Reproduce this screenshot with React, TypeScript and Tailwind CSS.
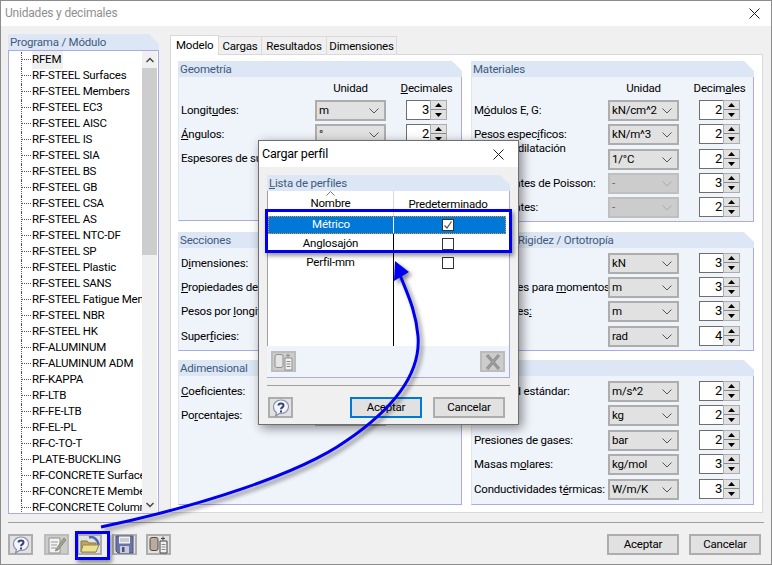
import React from 'react';

const modules = [
  'RFEM', 'RF-STEEL Surfaces', 'RF-STEEL Members', 'RF-STEEL EC3', 'RF-STEEL AISC', 'RF-STEEL IS', 'RF-STEEL SIA',
  'RF-STEEL BS', 'RF-STEEL GB', 'RF-STEEL CSA', 'RF-STEEL AS', 'RF-STEEL NTC-DF', 'RF-STEEL SP', 'RF-STEEL Plastic',
  'RF-STEEL SANS', 'RF-STEEL Fatigue Members', 'RF-STEEL NBR', 'RF-STEEL HK', 'RF-ALUMINUM', 'RF-ALUMINUM ADM',
  'RF-KAPPA', 'RF-LTB', 'RF-FE-LTB', 'RF-EL-PL', 'RF-C-TO-T', 'PLATE-BUCKLING', 'RF-CONCRETE Surfaces',
  'RF-CONCRETE Members', 'RF-CONCRETE Columns',
];

const Chevron: React.FC<{ color?: string }> = ({ color = '#555' }) => (
  <svg width="10" height="6" viewBox="0 0 10 6" fill="none" stroke={color} strokeWidth="1">
    <path d="M0.5 0.5L5 5L9.5 0.5" />
  </svg>
);

const Arrow: React.FC<{ down?: boolean }> = ({ down }) => (
  <svg width="7" height="4" viewBox="0 0 7 4" fill="#000">
    <path d={down ? 'M0 0H7L3.5 4Z' : 'M0 4H7L3.5 0Z'} />
  </svg>
);

const Combo: React.FC<{ value: string; disabled?: boolean }> = ({ value, disabled }) => (
  <div className={`w-[71px] h-[21px] shrink-0 border-2 flex items-center justify-between pl-[2px] pr-[5px] ${disabled ? 'bg-[#cccccc] border-[#bfbfbf] text-[#666]' : 'bg-[#e1e1e1] border-[#adadad] text-black'}`}>
    <span>{value}</span>
    <Chevron color={disabled ? '#aaa' : '#555'} />
  </div>
);

const Spinner: React.FC<{ value: number }> = ({ value }) => (
  <div className="w-[41px] h-[20px] shrink-0 ml-[20px] flex">
    <div className="w-[24px] bg-white border border-[#6e6e6e] border-r-0 text-right pr-[1px] text-[13px] leading-[17px]">{value}</div>
    <div className="w-[17px] bg-[#e1e1e1] border border-[#adadad] flex flex-col items-center justify-around py-[1px]">
      <Arrow />
      <div className="w-full h-px bg-[#888]" />
      <Arrow down />
    </div>
  </div>
);

const Row: React.FC<{ label: React.ReactNode; value: string; dec: number; tall?: boolean; disabled?: boolean; wrap?: boolean }> = ({ label, value, dec, tall, disabled, wrap }) => (
  <div className={`flex items-start pl-[2px] ${tall ? 'h-[25px]' : 'h-[24px]'}`}>
    <div className={`w-[134px] shrink-0 flex items-center h-[21px] ${wrap ? 'leading-[15px] -mt-[4px]' : 'whitespace-nowrap'}`}>
      <span>{label}</span>
    </div>
    <Combo value={value} disabled={disabled} />
    <Spinner value={dec} />
  </div>
);

const Group: React.FC<{ title: React.ReactNode; children?: React.ReactNode }> = ({ title, children }) => (
  <div className="flex flex-col">
    <div className="h-[16px] shrink-0 bg-[#dce6f4] text-[#3f5b7d] pl-[2px] leading-[17px] [clip-path:polygon(0_0,calc(100%-10px)_0,100%_10px,100%_100%,0_100%)]">{title}</div>
    <div className="flex-1 bg-[#eff3fa] border-r border-b border-[#aaaae6] border-l border-l-[#dce6f4]">{children}</div>
  </div>
);

const ColHeads: React.FC<{ decimals: React.ReactNode }> = ({ decimals }) => (
  <div className="h-[23px] flex items-center pl-[2px]">
    <div className="w-[134px]" />
    <div className="w-[71px] text-center">Unidad</div>
    <div className="w-[61px] ml-[10px] text-center">{decimals}</div>
  </div>
);

const HelpIcon: React.FC = () => (
  <svg width="18" height="18" viewBox="0 0 18 18">
    <path d="M9 1C4.5 1 1.5 4 1.5 8c0 2.500 1.300 4.500 3 5.500L3.500 17l4-2.600C12.500 15 16.500 12 16.500 8 16.500 4 13.500 1 9 1Z" fill="#f4f6fb" stroke="#8b93ad" strokeWidth="1.200" />
    <path d="M6.500 6.500C6.500 3.800 11.500 3.600 11.500 6.500 11.500 8.500 9 8.300 9 10.300" fill="none" stroke="#33407e" strokeWidth="2" />
    <rect x="8" y="11.500" width="2" height="2" fill="#33407e" />
  </svg>
);

const NotesIcon: React.FC = () => (
  <svg width="20" height="20" viewBox="0 0 20 20">
    <path d="M2 3H13V18H2Z" fill="#f2f2f2" stroke="#8f8f8f" />
    <path d="M4 7H11M4 10H10M4 13H9" stroke="#9a9a9a" />
    <path d="M9 14L17 3L19 5L11 15L8.500 16Z" fill="#a7a28a" stroke="#77746a" strokeWidth="0.700" />
  </svg>
);

const FolderIcon: React.FC = () => (
  <svg width="20" height="18" viewBox="0 0 20 18">
    <path d="M9 1.500C13 0 18 3 18.500 9" fill="none" stroke="#4c6aa8" strokeWidth="2.500" />
    <path d="M1 5H7L9 7H16V16H1Z" fill="#b9a862" stroke="#86794a" />
    <path d="M3 9H19L16 16H1Z" fill="#eee08e" stroke="#94864f" />
  </svg>
);

const SaveIcon: React.FC = () => (
  <svg width="19" height="19" viewBox="0 0 19 19">
    <path d="M1 1H18V18H3L1 16Z" fill="#6b74a6" stroke="#4a5280" />
    <rect x="4" y="1.500" width="11" height="7" fill="#f3f3f3" />
    <path d="M5 4H14M5 6H14" stroke="#a6a6a6" />
    <rect x="5" y="11" width="9" height="7" fill="#c8cbd9" />
    <rect x="7" y="12" width="2.500" height="5" fill="#4a5280" />
  </svg>
);

const CopyIcon: React.FC<{ faded?: boolean }> = ({ faded }) => (
  <svg width="20" height="19" viewBox="0 0 20 19">
    <rect x="1" y="2.500" width="8" height="13" rx="2" fill={faded ? '#e4e4e4' : '#b9aba0'} stroke={faded ? '#8f8f8f' : '#5c4a40'} />
    <path d="M11 6H18V18H11Z" fill="#f1f1f1" stroke={faded ? '#8f8f8f' : '#444'} />
    <path d="M12.500 9.500H16.500M12.500 12H16.500M12.500 14.500H16.500" stroke="#888" />
    <path d="M12 3.500H16M14 1.500V5.500" stroke={faded ? '#8f8f8f' : '#444'} />
  </svg>
);

const DeleteIcon: React.FC = () => (
  <svg width="18" height="18" viewBox="0 0 18 18" fill="none">
    <path d="M3 2L15 16M15 2L3 16" stroke="#8c8c8c" strokeWidth="3" />
    <path d="M3 2L15 16M15 2L3 16" stroke="#a9a9a9" strokeWidth="1" />
  </svg>
);

const IconButton: React.FC<{ children: React.ReactNode; disabled?: boolean; className?: string }> = ({ children, disabled, className = '' }) => (
  <div className={`h-[21px] w-[25px] shrink-0 border-2 flex items-center justify-center ${disabled ? 'bg-[#cccccc] border-[#bcbcbc]' : 'bg-[#e1e1e1] border-[#adadad]'} ${className}`}>
    {children}
  </div>
);

const Button: React.FC<{ label: string; focused?: boolean }> = ({ label, focused }) => (
  <div className={`w-[72px] h-[21px] shrink-0 border-2 bg-[#e1e1e1] flex items-center justify-center ${focused ? 'border-[#0078d7]' : 'border-[#adadad]'}`}>{label}</div>
);

const CloseX: React.FC = () => (
  <svg width="11" height="11" viewBox="0 0 11 11" stroke="#222" strokeWidth="1" fill="none">
    <path d="M0.500 0.500L10.500 10.500M10.500 0.500L0.500 10.500" />
  </svg>
);

const Check: React.FC<{ checked?: boolean }> = ({ checked }) => (
  <div className="w-[12px] h-[12px] border border-[#333] bg-white flex items-center justify-center">
    {checked && (
      <svg width="10" height="10" viewBox="0 0 10 10" fill="none" stroke="#555" strokeWidth="1.300">
        <path d="M1.500 5.500L4 8L8.500 1.500" />
      </svg>
    )}
  </div>
);

const App: React.FC = () => {
  return (
    <div className="relative w-[772px] h-[565px] overflow-hidden bg-[#f0f0f0] border border-[#8c8c8c] text-[11.500px] tracking-[-0.2px] text-black font-['Roboto',sans-serif] flex flex-col">
      {/* title bar */}
      <div className="h-[25px] shrink-0 bg-white flex items-center justify-between pl-[4px] pr-[11px]">
        <span className="text-[#8f8f8f] text-[12px] -mt-[2px]">Unidades y decimales</span>
        <CloseX />
      </div>

      <div className="flex pl-[7px] pt-[8px] h-[488px] shrink-0">
        {/* module list */}
        <div className="w-[151px] h-[480px] shrink-0 flex flex-col">
          <div className="h-[16px] shrink-0 bg-[#dce6f4] text-[#3f5b7d] pl-[2px] leading-[17px] [clip-path:polygon(0_0,calc(100%-10px)_0,100%_10px,100%_100%,0_100%)]">Programa / Módulo</div>
          <div className="flex-1 min-h-0 bg-white border border-[#aaaae6] flex overflow-hidden">
            <div className="w-[133px] shrink-0 overflow-hidden pt-[1px]">
              {modules.map((name, i) => (
                <div key={name} className="h-[16px] flex items-center whitespace-nowrap pl-[12px]">
                  <span className={`w-[11px] h-[16px] shrink-0 border-l border-dotted border-[#555] relative ${i === 28 ? 'h-[8px] self-start' : ''}`}>
                    <span className="absolute left-0 top-[7px] w-[9px] border-t border-dotted border-[#555]" />
                  </span>
                  <span className={`pr-[2px] ${i === 0 ? 'bg-[#f0f0f0]' : ''}`}>{name}</span>
                </div>
              ))}
            </div>
            <div className="w-[15px] shrink-0 bg-[#f0f0f0] flex flex-col">
              <div className="h-[17px] shrink-0 flex items-center justify-center">
                <svg width="8" height="6" viewBox="0 0 8 6" fill="none" stroke="#444" strokeWidth="1.500"><path d="M0.500 5L4 1.500L7.500 5" /></svg>
              </div>
              <div className="h-[187px] shrink-0 bg-[#cdcdcd]" />
              <div className="flex-1" />
              <div className="h-[17px] shrink-0 flex items-center justify-center">
                <svg width="8" height="6" viewBox="0 0 8 6" fill="none" stroke="#444" strokeWidth="1.500"><path d="M0.500 1L4 4.500L7.500 1" /></svg>
              </div>
            </div>
          </div>
        </div>

        {/* tabs */}
        <div className="ml-[11px] w-[593px] flex flex-col">
          <div className="flex h-[20px] items-end shrink-0">
            <div className="w-[49px] h-[20px] bg-white border border-b-0 border-[#d9d9d9] pl-[5px] leading-[18px] relative top-px z-10">Modelo</div>
            <div className="w-[43px] h-[18px] bg-[#f0f0f0] border border-b-0 border-l-0 border-[#d9d9d9] text-center leading-[18px]">Cargas</div>
            <div className="w-[65px] h-[18px] bg-[#f0f0f0] border border-b-0 border-l-0 border-[#d9d9d9] text-center leading-[18px]">Resultados</div>
            <div className="w-[70px] h-[18px] bg-[#f0f0f0] border border-b-0 border-l-0 border-[#d9d9d9] text-center leading-[18px]">Dimensiones</div>
          </div>
          <div className="h-[459px] bg-white border border-[#d9d9d9] pt-[6px] pl-[7px] grid grid-cols-[284px_283px] grid-rows-[160px_117px_145px] gap-x-[9px] gap-y-[11px]">
            <Group title="Geometría">
              <ColHeads decimals={<><u>D</u>ecimales</>} />
              <Row label={<>Longit<u>u</u>des:</>} value="m" dec={3} />
              <Row label={<><u>Á</u>ngulos:</>} value="°" dec={2} />
              <Row label="Espesores de superficies:" value="mm" dec={2} />
            </Group>
            <Group title="Materiales">
              <ColHeads decimals={<>Decim<u>a</u>les</>} />
              <Row label={<>M<u>ó</u>dulos E, G:</>} value="kN/cm^2" dec={2} />
              <Row label={<>Pesos espec<u>í</u>ficos:</>} value="kN/m^3" dec={2} tall />
              <Row label="Coef. de dilatación térmica:" value="1/°C" dec={2} wrap />
              <Row label="Coeficientes de Poisson:" value="-" dec={3} disabled />
              <Row label="Coeficientes:" value="-" dec={2} disabled />
            </Group>
            <Group title="Secciones">
              <div className="pt-[5px]">
                <Row label={<>D<u>i</u>mensiones:</>} value="mm" dec={1} />
                <Row label={<><u>P</u>ropiedades de secciones:</>} value="cm" dec={2} />
                <Row label={<>Pesos por <u>l</u>ongitud:</>} value="kg/m" dec={2} tall />
                <Row label={<>Super<u>f</u>icies:</>} value="m^2" dec={2} />
              </div>
            </Group>
            <Group title="Cargas / Rigidez / Ortotropía">
              <div className="pt-[5px]">
                <Row label="Fuerzas:" value="kN" dec={3} />
                <Row label={<>Longitudes para <u>m</u>omentos:</>} value="m" dec={3} />
                <Row label={<>Longitudes<u>:</u></>} value="m" dec={3} tall />
                <Row label="Ángulos:" value="rad" dec={4} />
              </div>
            </Group>
            <Group title="Adimensional">
              <div className="pt-[5px]">
                <Row label={<><u>C</u>oeficientes:</>} value="-" dec={2} />
                <Row label={<>Po<u>r</u>centajes:</>} value="%" dec={2} />
              </div>
            </Group>
            <Group title="Otros">
              <div className="pt-[5px]">
                <Row label="Gravedad estándar:" value="m/s^2" dec={2} />
                <Row label="Masas:" value="kg" dec={2} tall />
                <Row label={<>Presiones de <u>g</u>ases:</>} value="bar" dec={2} />
                <Row label={<>Masas m<u>o</u>lares:</>} value="kg/mol" dec={3} tall />
                <Row label={<>Conductividades t<u>é</u>rmicas:</>} value="W/m/K" dec={3} />
              </div>
            </Group>
          </div>
        </div>
      </div>

      {/* footer */}
      <div className="h-px mx-[7px] mt-[8px] bg-[#a0a0a0] shrink-0" />
      <div className="flex items-center h-[21px] mt-[11px] pl-[7px] shrink-0">
        <IconButton><HelpIcon /></IconButton>
        <IconButton disabled className="ml-[11px]"><NotesIcon /></IconButton>
        <IconButton className="ml-[8px]"><FolderIcon /></IconButton>
        <IconButton className="ml-[10px]"><SaveIcon /></IconButton>
        <IconButton className="ml-[9px]"><CopyIcon /></IconButton>
        <div className="flex-1" />
        <Button label="Aceptar" />
        <div className="w-[10px]" />
        <Button label="Cancelar" />
        <div className="w-[10px]" />
      </div>

      {/* Cargar perfil dialog */}
      <div className="absolute left-[257px] top-[139px] w-[261px] h-[285px] bg-[#f0f0f0] border border-[#6f6f6f] shadow-[3px_3px_10px_rgba(0,0,0,0.45)] flex flex-col">
        <div className="h-[26px] shrink-0 bg-white flex items-center justify-between pl-[3px] pr-[14px] text-[12.500px]">
          <span>Cargar perfil</span>
          <CloseX />
        </div>
        <div className="mx-[8px] mt-[8px] h-[203px] flex flex-col shrink-0">
          <div className="h-[16px] shrink-0 bg-[#dce6f4] text-[#3f5b7d] pl-[2px] leading-[16px] [clip-path:polygon(0_0,calc(100%-10px)_0,100%_10px,100%_100%,0_100%)]"><u>L</u>ista de perfiles</div>
          <div className="flex-1 flex flex-col bg-[#eff3fa] border-r border-b border-[#aaaae6]">
            <div className="h-[155px] shrink-0 bg-white border-l border-[#a0a0a0] flex flex-col">
              <div className="h-[25px] shrink-0 flex mr-[7px]">
                <div className="w-[126px] border-r border-[#d9d9d9] flex flex-col items-center">
                  <svg width="9" height="5" viewBox="0 0 9 5" fill="none" stroke="#777"><path d="M0.500 4.500L4.500 0.500L8.500 4.500" /></svg>
                  <span className="leading-[15px]">Nombre</span>
                </div>
                <div className="flex-1 flex justify-center items-end pb-[3px]">Predeterminado</div>
              </div>
              <div className="flex h-[18px] shrink-0 bg-[#0078d7] text-white border border-dotted border-[#e09a50] mr-[3px]">
                <div className="w-[125px] border-r border-white flex items-center justify-center">Métrico</div>
                <div className="flex-1 flex items-center justify-center pr-[4px]"><Check checked /></div>
              </div>
              {['Anglosajón', 'Perfil-mm'].map((name) => (
                <div key={name} className="flex h-[19px] shrink-0 mr-[7px]">
                  <div className="w-[126px] border-r border-black flex items-center justify-center">{name}</div>
                  <div className="flex-1 flex items-center justify-center"><Check /></div>
                </div>
              ))}
              <div className="flex-1 w-[126px] border-r border-black" />
            </div>
            <div className="flex-1 flex items-center justify-between px-[4px]">
              <IconButton disabled><CopyIcon faded /></IconButton>
              <IconButton disabled><DeleteIcon /></IconButton>
            </div>
          </div>
        </div>
        <div className="h-px mx-[8px] mt-[7px] bg-[#a0a0a0] shrink-0" />
        <div className="flex items-center h-[21px] mt-[11px] pl-[9px] shrink-0">
          <IconButton><HelpIcon /></IconButton>
          <div className="w-[57px]" />
          <Button label="Aceptar" focused />
          <div className="w-[11px]" />
          <Button label="Cancelar" />
        </div>
      </div>

      {/* callout frames and arrow */}
      <div className="absolute left-[264px] top-[208px] w-[247px] h-[44px] border-[3px] border-[#0000f0] shadow-[2px_3px_4px_rgba(0,0,0,0.4)] pointer-events-none" />
      <div className="absolute left-[74px] top-[530px] w-[35px] h-[29px] border-[3px] border-[#0000f0] shadow-[2px_3px_4px_rgba(0,0,0,0.4)] pointer-events-none" />
      <svg className="absolute left-0 top-0 pointer-events-none drop-shadow-[3px_3px_2px_rgba(0,0,0,0.45)]" width="772" height="565" viewBox="0 0 772 565" fill="none">
        <path d="M100 526C200 505 300 472 345 440C392 408 420 372 417 335C415 310 406 292 399 274" stroke="#0000f0" strokeWidth="3" />
        <path d="M394 260L408 271L393 280Z" fill="#0000f0" />
      </svg>
    </div>
  );
};

export default App;
